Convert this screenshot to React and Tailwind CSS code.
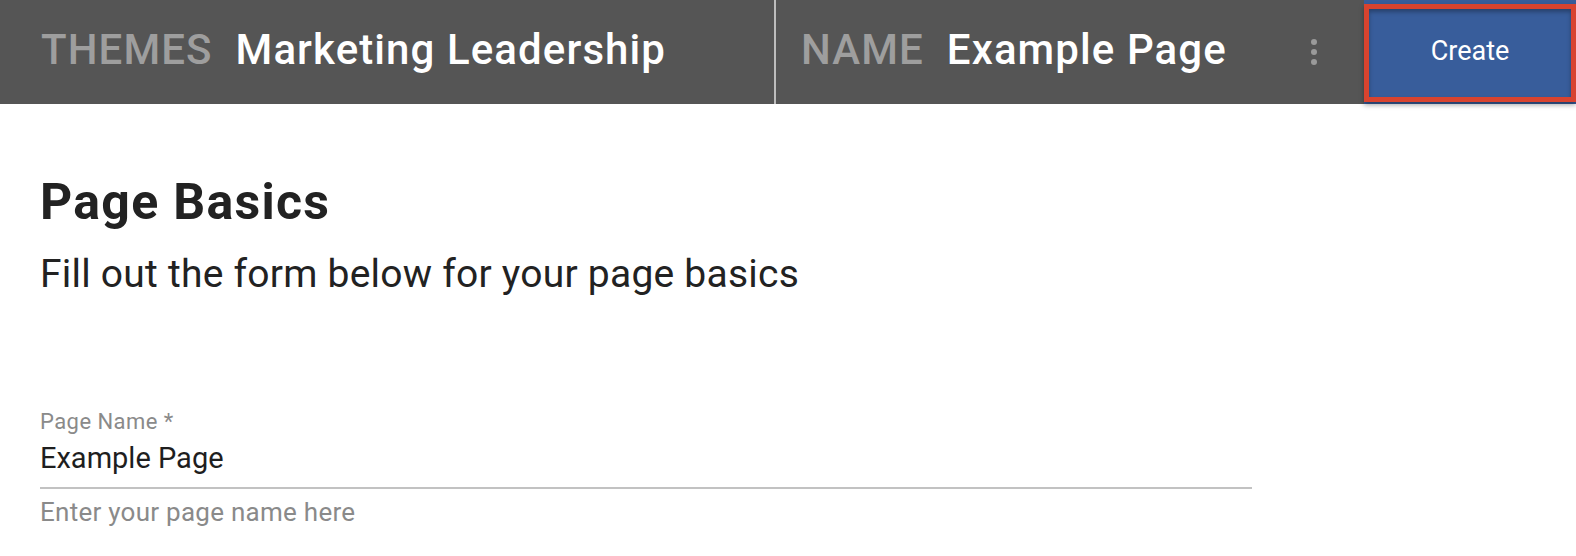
export default function App() {
  return (
    <div className="min-h-screen bg-white font-['Roboto','Liberation_Sans',sans-serif]">
      {/* Top bar */}
      <header className="flex h-[104px] bg-[#555555]">
        <div className="flex w-[774px] items-center gap-[23px] pb-[4px] pl-[41px] text-[42px] font-medium leading-none tracking-[0.026em]">
          <span className="text-[#9e9e9e]">THEMES</span>
          <span className="text-white">Marketing Leadership</span>
        </div>
        <div className="w-[2px] bg-[#bdbdbd]" />
        <div className="flex flex-1 items-center">
          <div className="flex items-center gap-[23px] pb-[4px] pl-[25px] text-[42px] font-medium leading-none tracking-[0.026em]">
            <span className="text-[#9e9e9e]">NAME</span>
            <span className="text-white">Example Page</span>
          </div>
          <div className="ml-auto mr-[47px] flex flex-col items-center gap-[4px]">
            <span className="block h-[6px] w-[6px] rounded-full bg-[#9a9a9a]" />
            <span className="block h-[6px] w-[6px] rounded-full bg-[#9a9a9a]" />
            <span className="block h-[6px] w-[6px] rounded-full bg-[#9a9a9a]" />
          </div>
          <div className="flex h-full w-[212px] items-start bg-[#385d9b] pt-[4px]">
            <button className="flex h-[98px] w-full items-center justify-center border-[5px] border-[#d8432f] bg-[#385d9b] pb-[3px] text-[27px] leading-none text-white shadow-[0_3px_5px_rgba(0,0,0,0.35),inset_0_3px_4px_rgba(0,0,0,0.3)]">
              Create
            </button>
          </div>
        </div>
      </header>

      {/* Page content */}
      <main className="pl-[40px] pt-[73px]">
        <h1 className="text-[50px] font-bold leading-none tracking-[0.026em] text-[#222222]">Page Basics</h1>
        <p className="mt-[28px] text-[39px] leading-none tracking-[0.006em] text-[#222222]">
          Fill out the form below for your page basics
        </p>

        <div className="mt-[117px] w-[1212px]">
          <label className="block text-[22px] leading-none tracking-[0.02em] text-[#8a8a8a]">Page Name *</label>
          <div className="mt-[11px] border-b-2 border-[#c2c2c2] pb-[14px] text-[29px] leading-none text-[#1e1e1e]">
            Example Page
          </div>
          <p className="mt-[10px] text-[26px] leading-none tracking-[0.01em] text-[#8a8a8a]">Enter your page name here</p>
        </div>
      </main>
    </div>
  );
}
